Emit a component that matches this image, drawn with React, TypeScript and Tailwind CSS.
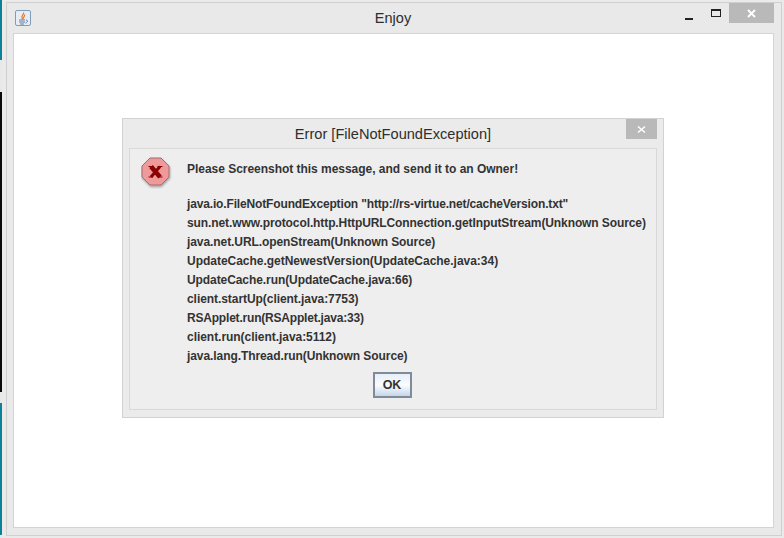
export default function App() {
  const lines = [
    { text: 'java.io.FileNotFoundException "http://rs-virtue.net/cacheVersion.txt"', cls: 'tracking-[-0.15px]' },
    { text: 'sun.net.www.protocol.http.HttpURLConnection.getInputStream(Unknown Source)', cls: 'tracking-[-0.1px]' },
    { text: 'java.net.URL.openStream(Unknown Source)', cls: 'tracking-[-0.08px]' },
    { text: 'UpdateCache.getNewestVersion(UpdateCache.java:34)', cls: 'tracking-[-0.02px]' },
    { text: 'UpdateCache.run(UpdateCache.java:66)', cls: 'tracking-[-0.08px]' },
    { text: 'client.startUp(client.java:7753)', cls: 'tracking-[-0.06px]' },
    { text: 'RSApplet.run(RSApplet.java:33)', cls: 'tracking-[-0.2px]' },
    { text: 'client.run(client.java:5112)', cls: 'tracking-[-0.04px]' },
    { text: 'java.lang.Thread.run(Unknown Source)', cls: 'tracking-[-0.08px]' },
  ];
  return (
    <div className="flex h-[538px] w-[784px] overflow-hidden bg-[#eaeaea] font-['Liberation_Sans',Arial,sans-serif]">
      <div className="flex w-[2px] shrink-0 flex-col bg-[#e8e8e8]">
        <div className="h-[60px] bg-[#0d8296]" />
        <div className="h-[32px]" />
        <div className="h-[300px] bg-[#0a0a0a]" />
        <div className="h-[11px]" />
        <div className="h-[132px] bg-[#0d8296]" />
      </div>
      <div className="ml-[4px] mt-[2px] mb-[2px] flex w-[776px] shrink-0 flex-col border border-[#d0d0d0] bg-[#e9e9e9]">
        <div className="relative flex h-[30px] shrink-0 items-center pl-[8px]">
          <div className="flex h-[16px] w-[16px] items-center justify-center rounded-[2px] border border-[#7f9db9] bg-[#e6edf4]">
            <svg width="12" height="13" viewBox="0 0 12 13">
              <path d="M6.5 0.5C7.5 2.5 4 3.5 5 6C5.5 7 6 7 6 7C5.5 5.5 8.5 4.5 7.5 2.5" fill="none" stroke="#e8762b" strokeWidth="1.2" />
              <path d="M2 8H8M2 10H8M3 12H7" stroke="#5f7f9f" strokeWidth="1" />
              <path d="M9 8C11 8 11 10.5 8.5 11" fill="none" stroke="#5f7f9f" strokeWidth="1" />
            </svg>
          </div>
          <div className="flex-1 pr-[26px] text-center text-[14.5px] leading-[30px] text-[#2e2e2e]">Enjoy</div>
          <div className="absolute left-[678px] top-[15px] h-[2px] w-[8px] bg-[#222222]" />
          <div className="absolute left-[704px] top-[6px] h-[8px] w-[10px] border border-t-[2px] border-[#222222]" />
          <div className="absolute left-[722px] top-[0px] flex h-[20px] w-[45px] items-center justify-center bg-[#b9b9b9]">
            <svg width="9" height="9" viewBox="0 0 9 9">
              <path d="M1 1L8 8M8 1L1 8" stroke="#ffffff" strokeWidth="1.8" />
            </svg>
          </div>
        </div>
        <div className="ml-[6px] w-[761px] h-[495px] border border-[#d4d4d4] bg-white pl-[108px] pt-[84px]">
          <div className="w-[542px] h-[300px] border border-[#d2d2d2] bg-[#ebebeb]">
            <div className="relative h-[29px] text-center text-[14.6px] leading-[30px] text-[#2e2e2e]">
              Error [FileNotFoundException]
              <div className="absolute right-[6px] top-0 flex h-[20px] w-[31px] items-center justify-center bg-[#b9b9b9]">
                <svg width="9" height="9" viewBox="0 0 9 9">
                  <path d="M1 1.5L8 7.5M8 1.5L1 7.5" stroke="#ffffff" strokeWidth="1.6" />
                </svg>
              </div>
            </div>
            <div className="mx-[6px] flex h-[262px] flex-col border border-[#d8d8d8] bg-[#eeeeee]">
              <div className="flex flex-1">
                <div className="ml-[11px] mt-[8px] h-[32px] w-[31px] shrink-0">
                  <svg width="31" height="32" viewBox="0 0 31 32">
                    <defs>
                      <filter id="s" x="-20%" y="-20%" width="140%" height="140%">
                        <feDropShadow dx="0.5" dy="1.5" stdDeviation="1" floodColor="#000000" floodOpacity="0.35" />
                      </filter>
                    </defs>
                    <polygon points="9,1 20,1 28,9 28,20 20,28 9,28 1,20 1,9" fill="#ee9a9a" stroke="#a86a6a" strokeWidth="1" filter="url(#s)" />
                    <path d="M10 9.5L19 20" stroke="#8b0000" strokeWidth="4.6" />
                    <path d="M19 9.5L10 20" stroke="#8b0000" strokeWidth="3" />
                    <path d="M7.5 9.5H13M16.5 9.5H21.5M7.5 20H12M17 20H21.5" stroke="#8b0000" strokeWidth="1.2" />
                  </svg>
                </div>
                <div className="ml-[15px] mt-[11px] text-[12px] font-bold leading-[19px] text-[#333333] whitespace-nowrap">
                  <div className="tracking-[-0.03px]">Please Screenshot this message, and send it to an Owner!</div>
                  <div className="h-[16px]" />
                  {lines.map((l) => (
                    <div key={l.text} className={l.cls}>{l.text}</div>
                  ))}
                </div>
              </div>
              <div className="flex justify-center pb-[11px] pr-[2px]">
                <button className="h-[26px] w-[39px] border-[2px] border-[#7d8b9b] bg-gradient-to-b from-[#e6eef7] via-[#fbfcfe] to-[#c4d6ea] text-[12.5px] font-bold text-[#333333]">
                  OK
                </button>
              </div>
            </div>
          </div>
        </div>
      </div>
    </div>
  );
}
